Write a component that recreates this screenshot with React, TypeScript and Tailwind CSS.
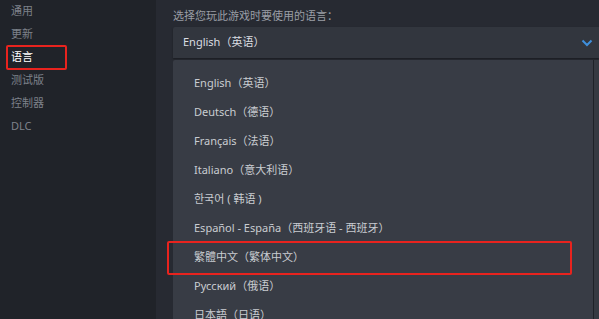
import React from "react";

const sideItems = ["通用", "更新", "语言", "测试版", "控制器", "DLC"];

const languages = [
  "English（英语）",
  "Deutsch（德语）",
  "Français（法语）",
  "Italiano（意大利语）",
  "한국어 ( 韩语 )",
  "Español - España（西班牙语 - 西班牙）",
  "繁體中文（繁体中文）",
  "Русский（俄语）",
  "日本語（日语）",
];

export default function App() {
  return (
    <div
      className="flex w-[599px] h-[319px] overflow-hidden bg-[#272a32] text-[11px]"
      style={{ fontFamily: '"Noto Sans", "Noto Sans CJK SC", sans-serif' }}
    >
      {/* sidebar */}
      <div className="w-[156px] shrink-0 bg-[#202329]">
        {sideItems.map((item) => (
          <div key={item} className="relative h-[23px] flex items-center pl-[11px]">
            <span className={item === "语言" ? "text-white" : "text-[#7d8189]"}>{item}</span>
            {item === "语言" && (
              <div className="absolute left-[6px] top-[-1px] w-[61px] h-[25px] border-2 border-[#e8231e] rounded-[2px]" />
            )}
          </div>
        ))}
      </div>

      {/* main */}
      <div className="flex-1 flex flex-col pl-[17px] pt-[8px] min-w-0">
        <div className="shrink-0 h-[16px] leading-[16px] text-[#9a9ea6]">选择您玩此游戏时要使用的语言：</div>
        <div className="shrink-0 mt-[3px] h-[31px] flex items-center justify-between bg-[#32363e] pl-[10px] pr-[6px] rounded-tl-[2px] shadow-[0_1px_2px_rgba(0,0,0,0.35)]">
          <span className="text-[#dadde2]">English（英语）</span>
          <svg width="12" height="8" viewBox="0 0 12 8" className="mt-[1px]">
            <path d="M1.5 1.5 L6 6 L10.5 1.5" fill="none" stroke="#3f8fdc" strokeWidth="2" />
          </svg>
        </div>
        <div className="flex flex-1 min-h-0 mt-[2px]">
          <div className="relative w-[420px] bg-[#383c45] pt-[9px] rounded-tl-[2px]">
            {languages.map((lang) => (
              <div key={lang} className="relative h-[29px] shrink-0 flex items-center pl-[21px] text-[#c9ccd1]">
                {lang}
                {lang.startsWith("繁體") && (
                  <div className="absolute left-[-6px] top-[-2px] w-[405px] h-[34px] border-2 border-[#e8231e] rounded-[2px]" />
                )}
              </div>
            ))}
          </div>
          <div className="w-[1px] bg-[#1f2228]" />
          <div className="flex-1 bg-[#363a42]" />
        </div>
      </div>
    </div>
  );
}
